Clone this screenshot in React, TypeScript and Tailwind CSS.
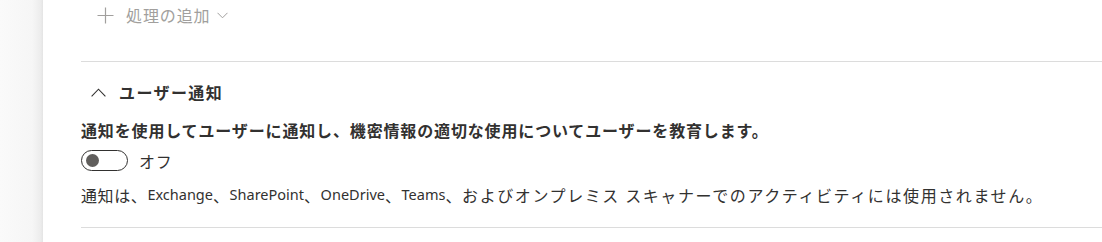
import React from "react";

const jp = "font-['Noto_Sans_CJK_JP','Noto_Sans',sans-serif]";

function L({ children }: { children: React.ReactNode }) {
  return <span className="font-['Noto_Sans','Noto_Sans_CJK_JP',sans-serif] tracking-normal text-[14.5px]">{children}</span>;
}

export default function App() {
  return (
    <div className="flex w-[1102px] h-[242px] bg-white overflow-hidden">
      <div className="w-[43px] shrink-0 h-full bg-[linear-gradient(to_right,#fafafa_0%,#f6f6f6_75%,#ececec_95%,#e4e4e4_100%)]" />
      <div className={`flex-1 pl-[38px] flex flex-col text-[#323130] ${jp}`}>
        <div className="h-[30px] flex items-center">
          <svg width="17" height="17" viewBox="0 0 17 17" className="ml-[16px]">
            <path d="M8.5 0.5V16.5M0.5 8.5H16.5" stroke="#a19f9d" strokeWidth="1.2" fill="none" />
          </svg>
          <span className="ml-[12px] text-[16px] tracking-[0.9px] text-[#a19f9d]">処理の追加</span>
          <svg width="11" height="7" viewBox="0 0 11 7" className="ml-[6px] mt-[1px]">
            <path d="M0.5 0.8L5.5 5.8L10.5 0.8" stroke="#a19f9d" strokeWidth="1" fill="none" />
          </svg>
        </div>
        <div className="mt-[31px] h-px bg-[#dcdcdc]" />
        <div className="mt-[19px] h-[22px] flex items-center">
          <svg width="15" height="9" viewBox="0 0 15 9" className="ml-[10px]">
            <path d="M0.6 8.4L7.5 1.2L14.4 8.4" stroke="#323130" strokeWidth="1.1" fill="none" />
          </svg>
          <span className="ml-[13px] text-[16px] font-bold tracking-[1.4px]">ユーザー通知</span>
        </div>
        <div className="mt-[16px] h-[22px] flex items-center text-[16px] font-bold tracking-[0.85px]">
          通知を使用してユーザーに通知し、機密情報の適切な使用についてユーザーを教育します。
        </div>
        <div className="mt-[9px] h-[21px] flex items-center">
          <div className="w-[47px] h-[21px] rounded-full border border-[#323130] flex items-center pl-[4px]">
            <div className="w-[13px] h-[13px] rounded-full bg-[#605e5c]" />
          </div>
          <span className="ml-[11px] text-[16px] tracking-[0.8px]">オフ</span>
        </div>
        <div className="mt-[13px] h-[22px] flex items-center text-[16px] tracking-[0.6px] whitespace-nowrap">
          通知は、<L>Exchange</L>、<L>SharePoint</L>、<L>OneDrive</L>、<L>Teams</L>、<span className="tracking-[1.6px]">およびオンプレミス スキャナーでのアクティビティには使用されません。</span>
        </div>
        <div className="mt-[21px] h-px bg-[#dcdcdc]" />
      </div>
    </div>
  );
}
